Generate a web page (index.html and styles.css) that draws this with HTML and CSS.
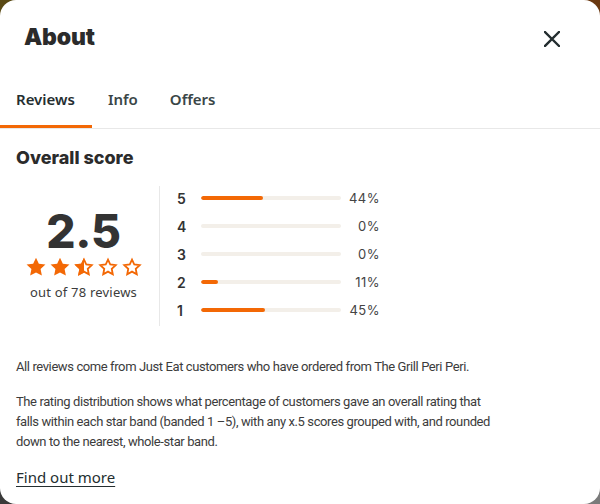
FILE: index.html
```html
<!DOCTYPE html>
<html lang="en">
<head>
<meta charset="utf-8">
<title>About</title>
<link rel="stylesheet" href="styles.css">
</head>
<body>
<div class="modal">
  <header class="header">
    <h1 class="title">About</h1>
    <button class="close" aria-label="Close">
      <svg width="16" height="16" viewBox="0 0 16 16"><path d="M1 1L15 15M15 1L1 15" stroke="#242e30" stroke-width="2.4" stroke-linecap="square"/></svg>
    </button>
  </header>
  <nav class="tabs">
    <span class="tab active">Reviews</span>
    <span class="tab">Info</span>
    <span class="tab">Offers</span>
  </nav>
  <main class="content">
    <h2 class="subtitle">Overall score</h2>
    <section class="score">
      <div class="summary">
        <div class="big">2.5</div>
        <div class="stars">
          <svg class="star" viewBox="0 0 24 24"><path class="full" d="M12 1.8l3.1 6.6 7.2.9-5.3 5 1.4 7.1L12 17.9l-6.4 3.5 1.4-7.1-5.3-5 7.2-.9z"/></svg>
          <svg class="star" viewBox="0 0 24 24"><path class="full" d="M12 1.8l3.1 6.6 7.2.9-5.3 5 1.4 7.1L12 17.9l-6.4 3.5 1.4-7.1-5.3-5 7.2-.9z"/></svg>
          <svg class="star" viewBox="0 0 24 24"><defs><clipPath id="lh"><rect x="0" y="0" width="12" height="24"/></clipPath></defs><path class="empty" d="M12 3.9l2.5 5.4 5.9.7-4.3 4.1 1.1 5.8L12 17l-5.2 2.9 1.1-5.8L3.6 10l5.9-.7z"/><path class="full" clip-path="url(#lh)" d="M12 1.8l3.1 6.6 7.2.9-5.3 5 1.4 7.1L12 17.9l-6.4 3.5 1.4-7.1-5.3-5 7.2-.9z"/></svg>
          <svg class="star" viewBox="0 0 24 24"><path class="empty" d="M12 3.9l2.5 5.4 5.9.7-4.3 4.1 1.1 5.8L12 17l-5.2 2.9 1.1-5.8L3.6 10l5.9-.7z"/></svg>
          <svg class="star" viewBox="0 0 24 24"><path class="empty" d="M12 3.9l2.5 5.4 5.9.7-4.3 4.1 1.1 5.8L12 17l-5.2 2.9 1.1-5.8L3.6 10l5.9-.7z"/></svg>
        </div>
        <div class="count">out of 78 reviews</div>
      </div>
      <div class="bars">
        <div class="row"><span class="num">5</span><span class="track"><span class="fill" style="width:44%"></span></span><span class="pct">44%</span></div>
        <div class="row"><span class="num">4</span><span class="track"><span class="fill" style="width:0%"></span></span><span class="pct">0%</span></div>
        <div class="row"><span class="num">3</span><span class="track"><span class="fill" style="width:0%"></span></span><span class="pct">0%</span></div>
        <div class="row"><span class="num">2</span><span class="track"><span class="fill" style="width:12%"></span></span><span class="pct">11%</span></div>
        <div class="row"><span class="num">1</span><span class="track"><span class="fill" style="width:46%"></span></span><span class="pct">45%</span></div>
      </div>
    </section>
    <p class="text first">All reviews come from Just Eat customers who have ordered from The Grill Peri Peri.</p>
    <p class="text">The rating distribution shows what percentage of customers gave an overall rating that falls within each star band (banded 1 –5), with any x.5 scores grouped with, and rounded down to the nearest, whole-star band.</p>
    <a class="more" href="#">Find out more</a>
  </main>
</div>
</body>
</html>
```

FILE: styles.css
```css
* { box-sizing: border-box; }
html, body { margin: 0; padding: 0; }
body {
  width: 600px;
  height: 504px;
  background: conic-gradient(#6a3810 0 25%, #7a7a7a 0 50%, #3a3a3a 0 75%, #5a4a14 0);
  font-family: "Noto Sans", sans-serif;
  color: #242e30;
  overflow: hidden;
}
.modal {
  width: 600px;
  height: 504px;
  background: #fff;
  border-radius: 16px;
  overflow: hidden;
}
.header {
  height: 78px;
  display: flex;
  align-items: center;
  justify-content: space-between;
  padding: 0 40px 4px 24px;
}
.title {
  margin: 0;
  font-family: Inter, sans-serif;
  font-weight: 900;
  font-size: 23px;
  letter-spacing: -0.2px;
  color: #2b2b2b;
}
.close {
  border: 0;
  background: none;
  padding: 0;
  width: 16px;
  height: 16px;
  display: block;
  margin-top: 4px;
}
.close svg { display: block; }
.tabs {
  display: flex;
  height: 51px;
  border-bottom: 1px solid #e8e8e8;
}
.tab {
  padding: 0 16px 6px;
  display: flex;
  align-items: center;
  font-size: 15px;
  font-weight: 600;
  color: #3a4647;
  border-bottom: 3px solid transparent;
}
.tab.active {
  color: #242e30;
  border-bottom-color: #f36805;
  padding-right: 17px;
}
.content { padding: 0 16px; }
.subtitle {
  margin: 18px 0 0;
  font-family: Inter, sans-serif;
  font-weight: 800;
  font-size: 18px;
  line-height: 22px;
  color: #2b2b2b;
}
.score {
  display: flex;
  margin-top: 17px;
}
.summary {
  width: 144px;
  padding-right: 8px;
  border-right: 1px solid #e8e8e8;
  display: flex;
  flex-direction: column;
  align-items: center;
  padding-top: 21px;
}
.big {
  font-family: Inter, sans-serif;
  font-weight: 800;
  font-size: 46px;
  line-height: 48px;
  color: #333;
  letter-spacing: -0.3px;
}
.stars { display: flex; gap: 2px; margin-top: 1px; }
.star { width: 22px; height: 22px; display: block; }
.star .full { fill: #f36805; }
.star .empty { fill: none; stroke: #f36805; stroke-width: 2; stroke-linejoin: miter; }
.count {
  margin-top: 5px;
  font-size: 13px;
  color: #3c3c3c;
  letter-spacing: 0.2px;
}
.bars {
  display: flex;
  flex-direction: column;
  gap: 4px;
  padding: 0 0 4px 17px;
}
.row {
  height: 24px;
  display: flex;
  align-items: center;
}
.num {
  width: 23px;
  font-family: Inter, sans-serif;
  font-weight: 600;
  font-size: 14px;
  color: #333;
}
.track {
  width: 140px;
  height: 4px;
  border-radius: 2px;
  background: #f3efe9;
  overflow: hidden;
  margin-left: 1px;
}
.fill {
  display: block;
  height: 100%;
  background: #f36805;
  border-radius: 2px;
}
.pct {
  width: 39px;
  text-align: right;
  font-family: Inter, sans-serif;
  font-size: 13px;
  color: #444;
  letter-spacing: 0.5px;
}
.text {
  margin: 0;
  max-width: 486px;
  font-family: Roboto, sans-serif;
  font-size: 13px;
  letter-spacing: -0.4px;
  line-height: 20px;
  color: #3c3c3c;
}
.text.first { margin-top: 31px; margin-bottom: 15px; }
.more {
  display: inline-block;
  margin-top: 15px;
  font-family: "Noto Sans", sans-serif;
  font-size: 15px;
  color: #242e30;
  text-decoration: underline;
  text-underline-offset: 3px;
}
```
